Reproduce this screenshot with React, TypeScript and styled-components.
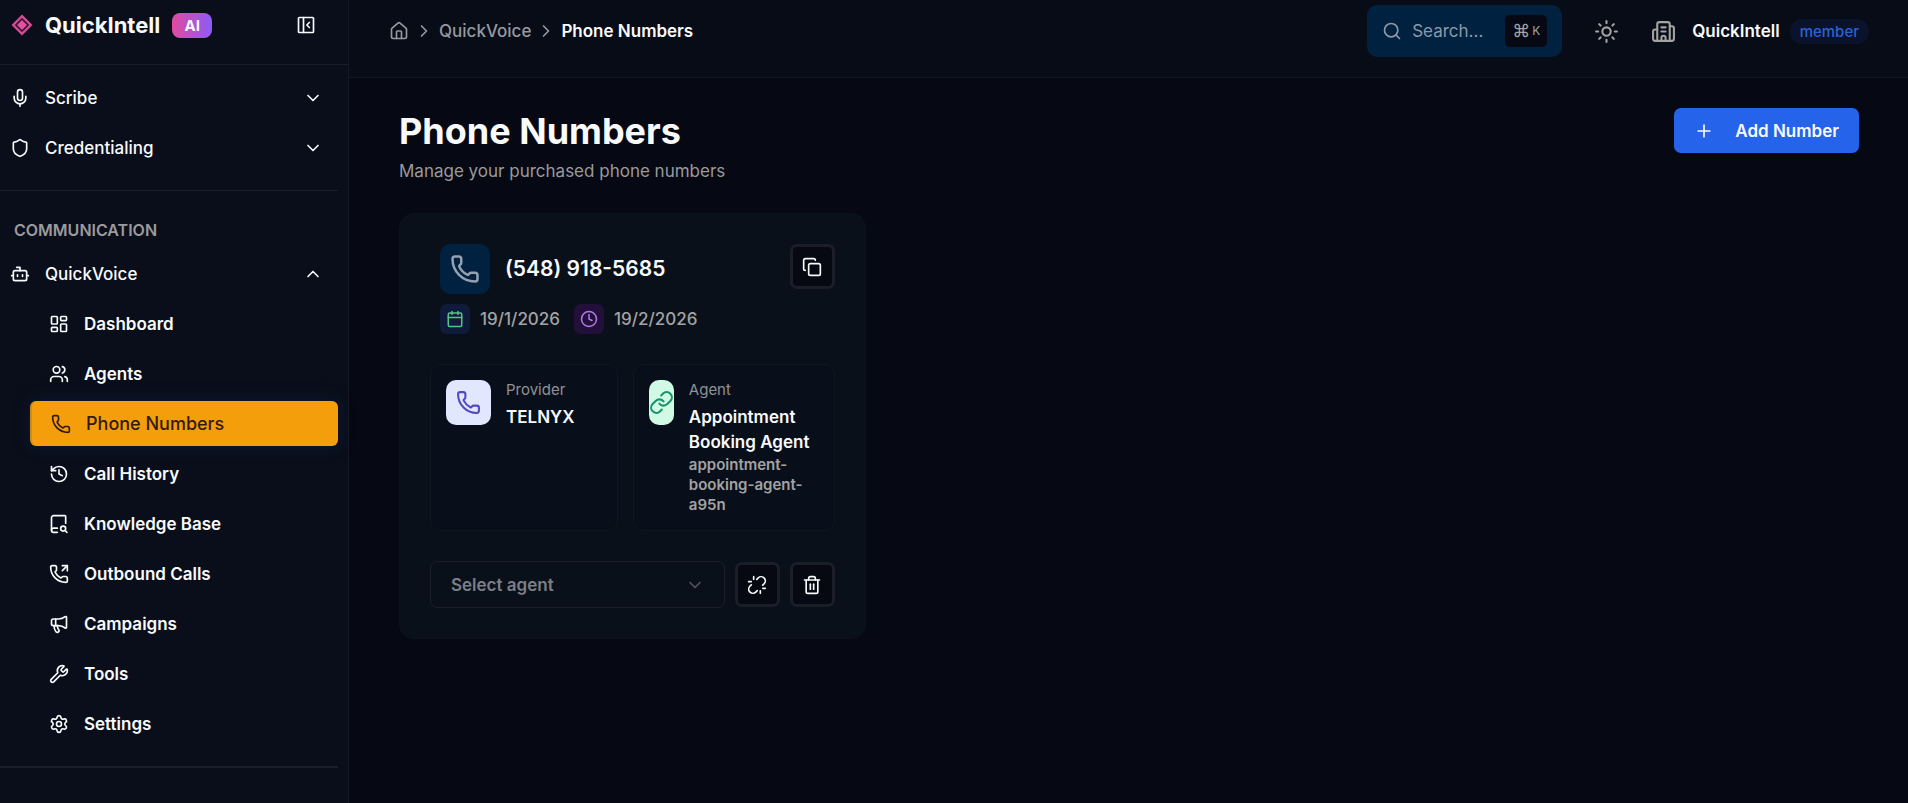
import React from "react";
import styled, { createGlobalStyle, css } from "styled-components";
import {
  Mic, Shield, ChevronDown, ChevronUp, ChevronRight, Bot, LayoutDashboard, Users, Phone, History,
  PhoneOutgoing, Megaphone, Wrench, Settings, House, Search, Sun, Plus, Copy, Calendar,
  Clock, Link as LinkIcon, Unlink, Trash2, Building2,
} from "lucide-react";

const GlobalStyle = createGlobalStyle`
  *, *::before, *::after { box-sizing: border-box; }
  body {
    margin: 0;
    background: #060913;
    color: #f8fafc;
    font-family: Inter, "Liberation Sans", sans-serif;
    font-size: 17px;
    line-height: 26px;
  }
  button, select { font: inherit; color: inherit; cursor: pointer; }
  svg { display: block; flex: none; }
  h1, h2, p, ul, ol, dl, dd { margin: 0; padding: 0; }
  ul, ol { list-style: none; }
`;

const Shell = styled.div`
  display: grid;
  grid-template-columns: 349px minmax(0, 1fr);
  min-height: 100vh;
`;

const Sidebar = styled.aside`
  background: #0a0e1a;
  border-right: 1px solid #151925;
`;

const Brand = styled.div`
  display: flex;
  align-items: center;
  height: 65px;
  padding: 0 30px 14px 10px;
  border-bottom: 1px solid #1a1e29;
`;

const BrandName = styled.span`
  margin-left: 11px;
  font-size: 22px;
  font-weight: 700;
`;

const BrandTag = styled.span`
  min-width: 40px;
  margin-left: 12px;
  border-radius: 8px;
  background: linear-gradient(90deg, #e14b9f, #8b5cf6);
  font-size: 15px;
  line-height: 25px;
  font-weight: 700;
  text-align: center;
`;

const CollapseButton = styled.button`
  margin-left: auto;
  padding: 2px;
  border: 0;
  background: none;
`;

const Nav = styled.nav`
  padding: 10px 10px 0 0;
`;

const Group = styled.ul`
  display: flex;
  flex-direction: column;
  gap: 5px;
`;

const SubGroup = styled(Group)`
  padding: 5px 0 0 30px;
`;

const Divider = styled.hr<{ $thick?: boolean }>`
  margin: 20px 0 0;
  border: 0;
  height: ${(p) => (p.$thick ? 2 : 1)}px;
  background: #1a1e29;
`;

const GroupLabel = styled.h2`
  padding: 26px 14px 8px;
  color: #9b9b9d;
  font-size: 16px;
  font-weight: 600;
`;

const rowStyle = css`
  display: flex;
  align-items: center;
  width: 100%;
  height: 45px;
`;

const SectionButton = styled.button`
  ${rowStyle}
  gap: 15px;
  padding: 0 15px 0 10px;
  border: 0;
  background: none;
  font-weight: 500;
  text-align: left;

  svg:last-child { margin-left: auto; }
`;

const NavLink = styled.a<{ $active?: boolean }>`
  ${rowStyle}
  gap: 15px;
  padding: 0 19px;
  border-radius: 6px;
  color: #f8fafc;
  font-weight: 600;
  text-decoration: none;
  ${(p) =>
    p.$active &&
    css`
      border-left: 2px solid #c98b1c;
      background: #f59e0b;
      color: #331a10;
      font-size: 18px;
      font-weight: 500;
      box-shadow: 0 0 18px rgba(20, 50, 110, 0.3);
    `}
`;

const Main = styled.div`
  min-width: 0;
`;

const TopBar = styled.header`
  display: flex;
  align-items: center;
  justify-content: space-between;
  height: 78px;
  padding: 0 39px 15px 40px;
  background: #080c16;
  border-bottom: 1px solid #121722;
`;

const Crumbs = styled.ol`
  display: flex;
  align-items: center;
  gap: 5px;
  color: #9699a0;
  font-weight: 500;

  a { display: block; color: inherit; text-decoration: none; }
  li:last-child { color: #f8fafc; font-weight: 600; }
`;

const TopActions = styled.div`
  display: flex;
  align-items: center;
`;

const SearchButton = styled.button`
  display: flex;
  align-items: center;
  width: 195px;
  height: 52px;
  gap: 10px;
  padding: 0 15px;
  border: 0;
  border-radius: 10px;
  background: #002140;
  color: #8d99a6;
`;

const Shortcut = styled.kbd`
  display: flex;
  align-items: center;
  justify-content: center;
  gap: 2px;
  width: 42px;
  height: 32px;
  margin-left: auto;
  border-radius: 5px;
  background: #060913;
  color: #a3a3a3;
  font-family: inherit;
  font-size: 12px;
`;

const CommandKey = styled.span`
  font-size: 18px;
`;

const ThemeButton = styled.button`
  padding: 10px;
  margin: 0 22px;
  border: 0;
  background: none;
  color: #a3a3a3;
`;

const Organization = styled.div`
  display: flex;
  align-items: center;
  font-weight: 600;

  svg { color: #a3a3a3; margin-right: 16px; }
`;

const RoleBadge = styled.span`
  margin-left: 10px;
  padding: 0 10px;
  border-radius: 13px;
  background: #0a132b;
  color: #2b62d9;
  font-size: 15px;
  line-height: 25px;
  font-weight: 500;
`;

const Content = styled.main`
  padding: 30px 49px 40px 50px;
`;

const PageHead = styled.div`
  display: flex;
  align-items: flex-start;
  justify-content: space-between;
`;

const Title = styled.h1`
  font-size: 36px;
  line-height: 46px;
  font-weight: 700;
`;

const Subtitle = styled.p`
  margin-top: 4px;
  color: #9a9a9c;
`;

const AddButton = styled.button`
  display: flex;
  align-items: center;
  height: 45px;
  gap: 21px;
  padding: 0 20px;
  border: 0;
  border-radius: 7px;
  background: #2563eb;
  font-weight: 600;
`;

const Cards = styled.div`
  display: grid;
  grid-template-columns: repeat(3, minmax(0, 1fr));
  gap: 30px;
  margin-top: 29px;
`;

const Card = styled.article`
  padding: 30px;
  border: 1px solid #0b121c;
  border-radius: 15px;
  background: #0a101a;
`;

const CardTop = styled.div`
  display: flex;
  align-items: flex-start;
  justify-content: space-between;
  padding-left: 10px;
`;

const NumberLine = styled.div`
  display: flex;
  align-items: center;
  gap: 15px;
`;

const PhoneNumber = styled.h2`
  font-size: 21px;
  font-weight: 600;
`;

const Tile = styled.span<{ $size: number; $bg: string; $color: string; $narrow?: boolean }>`
  display: flex;
  align-items: center;
  justify-content: center;
  flex: none;
  width: ${(p) => (p.$narrow ? 25 : p.$size)}px;
  height: ${(p) => p.$size}px;
  border-radius: ${(p) => (p.$size > 40 ? 10 : 7)}px;
  background: ${(p) => p.$bg};
  color: ${(p) => p.$color};
`;

const Dates = styled.div`
  display: flex;
  gap: 14px;
  margin-top: 10px;
`;

const DateItem = styled.span`
  display: flex;
  align-items: center;
  gap: 10px;
  color: #a3a3a3;
  font-weight: 500;
`;

const IconButton = styled.button`
  display: flex;
  align-items: center;
  justify-content: center;
  flex: none;
  width: 45px;
  height: 45px;
  padding: 0;
  border: 3px solid #1b1d28;
  border-radius: 7px;
  background: #060812;
`;

const Facts = styled.dl`
  display: grid;
  grid-template-columns: 188fr 202fr;
  gap: 15px;
  margin-top: 30px;
`;

const Fact = styled.div`
  display: flex;
  align-items: flex-start;
  gap: 15px;
  padding: 15px;
  border: 1px solid #0e1620;
  border-radius: 10px;
  background: #090f1a;
`;

const FactLabel = styled.dt`
  color: #8f9296;
  font-size: 15px;
  line-height: 20px;
`;

const FactValue = styled.dd`
  margin-top: 5px;
  line-height: 25px;
  font-weight: 600;
`;

const FactNote = styled.dd`
  color: #a3a3a3;
  font-size: 15px;
  line-height: 20px;
  font-weight: 600;
`;

const Actions = styled.div`
  display: flex;
  align-items: center;
  gap: 10px;
  margin-top: 30px;
`;

const SelectWrap = styled.div`
  display: grid;
  flex: 1;
  align-items: center;

  > * { grid-area: 1 / 1; }
  svg { justify-self: end; margin-right: 20px; color: #50545d; pointer-events: none; }
`;

const AgentSelect = styled.select`
  appearance: none;
  width: 100%;
  height: 47px;
  padding: 0 50px 0 20px;
  border: 1px solid #1a1f2a;
  border-radius: 7px;
  background: #0a101a;
  color: #7b7f87;
  font-weight: 600;
`;

const Logo = () => (
  <svg width="24" height="24" viewBox="0 0 24 24" aria-hidden="true">
    <path d="M12 3.2 20.8 12 12 20.8 3.2 12Z" fill="#350f30" stroke="#d44c94" strokeWidth="2.4" />
    <path d="M12 7 17 12 12 17 7 12Z" fill="#e0529d" />
  </svg>
);

const CollapseIcon = () => (
  <svg width="20" height="20" viewBox="0 0 24 24" fill="none" stroke="currentColor" strokeWidth="2" strokeLinecap="round" strokeLinejoin="round" aria-hidden="true">
    <rect x="3" y="3" width="18" height="18" rx="1" />
    <path d="M9 3v18M16 9l-3 3 3 3" />
  </svg>
);

const BookSearchIcon = ({ size = 20 }: { size?: number }) => (
  <svg width={size} height={size} viewBox="0 0 24 24" fill="none" stroke="currentColor" strokeWidth="2" strokeLinecap="round" strokeLinejoin="round" aria-hidden="true">
    <path d="M10 22H5.500a2.500 2.500 0 0 1 0-5H10" />
    <path d="m21.500 22-1.900-1.900" />
    <path d="M3 19.500v-15A2.500 2.500 0 0 1 5.500 2H19a1 1 0 0 1 1 1v8" />
    <circle cx="17" cy="17.500" r="3" />
  </svg>
);

const links = [
  { label: "Dashboard", Icon: LayoutDashboard },
  { label: "Agents", Icon: Users },
  { label: "Phone Numbers", Icon: Phone, active: true },
  { label: "Call History", Icon: History },
  { label: "Knowledge Base", Icon: BookSearchIcon },
  { label: "Outbound Calls", Icon: PhoneOutgoing },
  { label: "Campaigns", Icon: Megaphone },
  { label: "Tools", Icon: Wrench },
  { label: "Settings", Icon: Settings },
];

export default function App() {
  return (
    <>
      <GlobalStyle />
      <Shell>
        <Sidebar>
          <Brand>
            <Logo />
            <BrandName>QuickIntell</BrandName>
            <BrandTag>AI</BrandTag>
            <CollapseButton aria-label="Collapse sidebar"><CollapseIcon /></CollapseButton>
          </Brand>
          <Nav>
            <Group>
              <li><SectionButton><Mic size={20} />Scribe<ChevronDown size={20} /></SectionButton></li>
              <li><SectionButton><Shield size={20} />Credentialing<ChevronDown size={20} /></SectionButton></li>
            </Group>
            <Divider />
            <GroupLabel>COMMUNICATION</GroupLabel>
            <SectionButton aria-expanded="true"><Bot size={20} />QuickVoice<ChevronUp size={20} /></SectionButton>
            <SubGroup>
              {links.map(({ label, Icon, active }) => (
                <li key={label}>
                  <NavLink href="#" $active={active} aria-current={active ? "page" : undefined}>
                    <Icon size={20} />{label}
                  </NavLink>
                </li>
              ))}
            </SubGroup>
            <Divider $thick />
          </Nav>
        </Sidebar>
        <Main>
          <TopBar>
            <nav aria-label="Breadcrumb">
              <Crumbs>
                <li><a href="#" aria-label="Home"><House size={20} /></a></li>
                <li aria-hidden="true"><ChevronRight size={20} /></li>
                <li><a href="#">QuickVoice</a></li>
                <li aria-hidden="true"><ChevronRight size={20} /></li>
                <li aria-current="page">Phone Numbers</li>
              </Crumbs>
            </nav>
            <TopActions>
              <SearchButton>
                <Search size={20} />Search...
                <Shortcut><CommandKey>⌘</CommandKey>K</Shortcut>
              </SearchButton>
              <ThemeButton aria-label="Toggle theme"><Sun size={25} /></ThemeButton>
              <Organization>
                <Building2 size={25} />
                QuickIntell
                <RoleBadge>member</RoleBadge>
              </Organization>
            </TopActions>
          </TopBar>
          <Content>
            <PageHead>
              <div>
                <Title>Phone Numbers</Title>
                <Subtitle>Manage your purchased phone numbers</Subtitle>
              </div>
              <AddButton><Plus size={20} />Add Number</AddButton>
            </PageHead>
            <Cards>
              <Card>
                <CardTop>
                  <div>
                    <NumberLine>
                      <Tile $size={50} $bg="#002140" $color="#95a1ae"><Phone size={30} /></Tile>
                      <PhoneNumber>(548) 918-5685</PhoneNumber>
                    </NumberLine>
                    <Dates>
                      <DateItem><Tile $size={30} $bg="#101a3a" $color="#4fc58a"><Calendar size={18} /></Tile>19/1/2026</DateItem>
                      <DateItem><Tile $size={30} $bg="#22103a" $color="#b07ae8"><Clock size={18} /></Tile>19/2/2026</DateItem>
                    </Dates>
                  </div>
                  <IconButton aria-label="Copy number"><Copy size={20} /></IconButton>
                </CardTop>
                <Facts>
                  <Fact>
                    <Tile $size={45} $bg="#e0e7ff" $color="#5348c4"><Phone size={25} /></Tile>
                    <div>
                      <FactLabel>Provider</FactLabel>
                      <FactValue>TELNYX</FactValue>
                    </div>
                  </Fact>
                  <Fact>
                    <Tile $size={45} $narrow $bg="#d1fae5" $color="#1a936a"><LinkIcon size={25} /></Tile>
                    <div>
                      <FactLabel>Agent</FactLabel>
                      <FactValue>Appointment Booking Agent</FactValue>
                      <FactNote>appointment-booking-agent-a95n</FactNote>
                    </div>
                  </Fact>
                </Facts>
                <Actions>
                  <SelectWrap>
                    <AgentSelect aria-label="Agent" defaultValue="">
                      <option value="">Select agent</option>
                    </AgentSelect>
                    <ChevronDown size={20} />
                  </SelectWrap>
                  <IconButton aria-label="Unlink agent"><Unlink size={20} /></IconButton>
                  <IconButton aria-label="Delete number"><Trash2 size={20} /></IconButton>
                </Actions>
              </Card>
            </Cards>
          </Content>
        </Main>
      </Shell>
    </>
  );
}
